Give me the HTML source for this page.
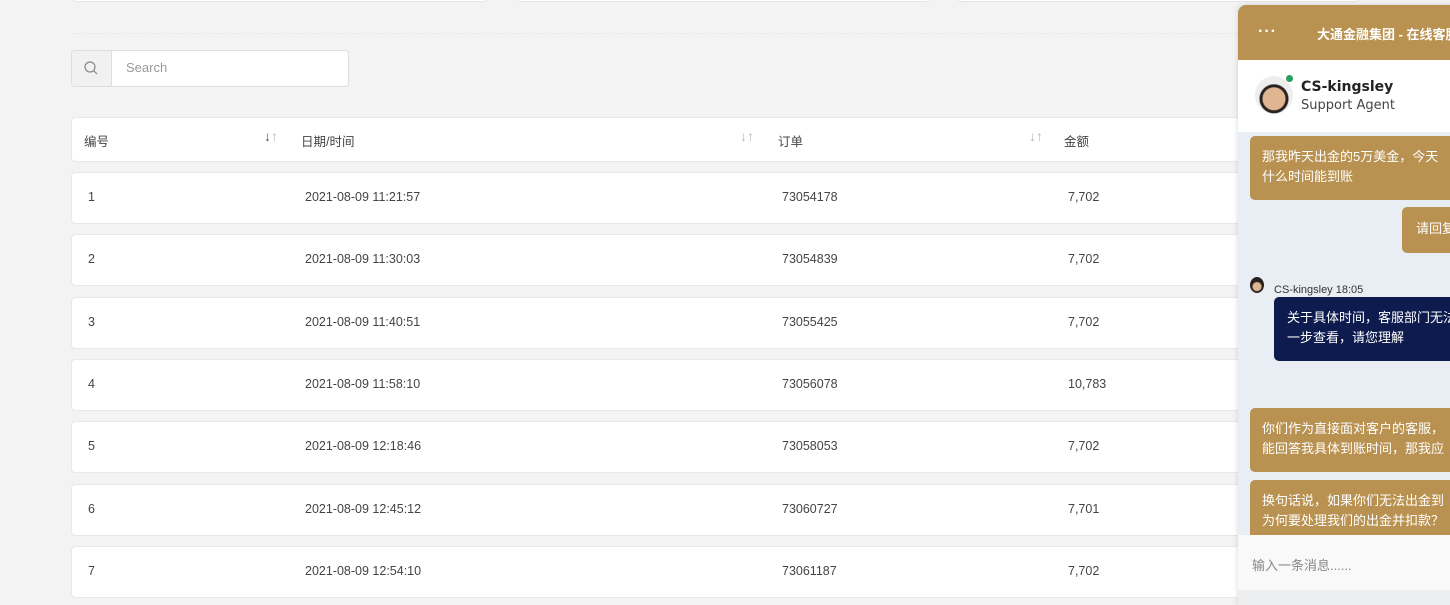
<!DOCTYPE html><html><head><meta charset="utf-8"><style>
body{margin:0;width:1450px;height:600px;overflow:hidden;background:#f3f3f3;font-family:"Liberation Sans","Noto Sans CJK SC",sans-serif;position:relative;color:#333}
.a{position:absolute}
.card{background:#fff;border-radius:4px;border:1px solid #e6e6e6}
.row{position:absolute;left:71px;width:1200px;height:50px;background:#fff;border:1px solid #e8e8e8;border-radius:4px;font-size:12.5px;color:#444}
.row span{position:absolute;top:17px}
.gold{background:#b99150;color:#fff}
.msg{position:absolute;font-size:13px;line-height:20px;border-radius:5px;padding:12px 14px;white-space:nowrap;overflow:hidden}
.ar{font-size:14px}
</style></head><body>
<div class="a card" style="left:72px;top:-10px;width:414px;height:10px"></div>
<div class="a card" style="left:516px;top:-10px;width:412px;height:10px"></div>
<div class="a card" style="left:957px;top:-10px;width:400px;height:10px"></div>
<div class="a" style="left:72px;top:33px;width:1166px;border-top:1px dashed #e8e8e8"></div>
<div class="a" style="left:71px;top:50px;width:276px;height:35px;background:#fff;border:1px solid #ddd;border-radius:4px">
<div class="a" style="left:0;top:0;width:39px;height:35px;background:#f1f1f1;border-right:1px solid #ddd;border-radius:4px 0 0 4px"><svg width="39" height="35"><circle cx="18" cy="16" r="5" fill="none" stroke="#888" stroke-width="1.2"/><line x1="21.5" y1="19.5" x2="25" y2="23" stroke="#888" stroke-width="1.2"/></svg></div>
<span class="a" style="left:54px;top:9px;font-size:13px;color:#999">Search</span></div>
<div class="row" style="top:117px;height:43px"><span style="left:12px;top:13px">编号</span><span class="ar" style="left:192px;top:10px;color:#555">↓<span style="color:#bbb;position:static">↑</span></span><span style="left:229px;top:13px">日期/时间</span><span class="ar" style="left:668px;top:10px;color:#bbb">↓↑</span><span style="left:706px;top:13px">订单</span><span class="ar" style="left:957px;top:10px;color:#bbb">↓↑</span><span style="left:992px;top:13px">金额</span></div>
<div class="row" style="top:172px"><span style="left:16px">1</span><span style="left:233px">2021-08-09 11:21:57</span><span style="left:710px">73054178</span><span style="left:996px">7,702</span></div>
<div class="row" style="top:234px"><span style="left:16px">2</span><span style="left:233px">2021-08-09 11:30:03</span><span style="left:710px">73054839</span><span style="left:996px">7,702</span></div>
<div class="row" style="top:297px"><span style="left:16px">3</span><span style="left:233px">2021-08-09 11:40:51</span><span style="left:710px">73055425</span><span style="left:996px">7,702</span></div>
<div class="row" style="top:359px"><span style="left:16px">4</span><span style="left:233px">2021-08-09 11:58:10</span><span style="left:710px">73056078</span><span style="left:996px">10,783</span></div>
<div class="row" style="top:421px"><span style="left:16px">5</span><span style="left:233px">2021-08-09 12:18:46</span><span style="left:710px">73058053</span><span style="left:996px">7,702</span></div>
<div class="row" style="top:484px"><span style="left:16px">6</span><span style="left:233px">2021-08-09 12:45:12</span><span style="left:710px">73060727</span><span style="left:996px">7,701</span></div>
<div class="row" style="top:546px"><span style="left:16px">7</span><span style="left:233px">2021-08-09 12:54:10</span><span style="left:710px">73061187</span><span style="left:996px">7,702</span></div>

<div class="a" style="left:1238px;top:5px;width:220px;height:600px;background:#e9edf4;border-radius:8px 0 0 0;overflow:hidden;box-shadow:0 0 6px rgba(0,0,0,.15)">
<div class="a gold" style="left:0;top:0;width:220px;height:55px"><span class="a" style="left:20px;top:22px;font-size:16px;font-weight:bold;letter-spacing:1px;line-height:10px">···</span><span class="a" style="left:79px;top:19px;font-size:13px;font-weight:bold;white-space:nowrap">大通金融集团 - 在线客服</span></div>
<div class="a" style="left:0;top:55px;width:220px;height:72px;background:#fff">
<div class="a" style="left:17px;top:16px;width:38px;height:38px;border-radius:50%;background:radial-gradient(circle at 50% 60%,#e0b592 0 11px,#2b2220 12px 14px,#eee 15px)"></div>
<div class="a" style="left:48px;top:15px;width:7px;height:7px;border-radius:50%;background:#2a9d5c"></div>
<span class="a" style="left:63px;top:19px;font-size:14px;font-weight:bold;color:#222;font-family:'DejaVu Sans',sans-serif">CS-kingsley</span>
<span class="a" style="left:63px;top:38px;font-size:13px;color:#444;font-family:'DejaVu Sans',sans-serif">Support Agent</span></div>
<div class="msg gold" style="left:12px;top:131px;width:200px;padding:11px 12px;height:42px">那我昨天出金的5万美金，今天<br>什么时间能到账</div>
<div class="msg gold" style="left:164px;top:202px;width:60px;height:22px">请回复</div>
<div class="a" style="left:12px;top:272px;width:14px;height:16px;border-radius:50%;background:radial-gradient(circle at 50% 60%,#e0b592 0 4px,#2b2220 5px)"></div>
<span class="a" style="left:36px;top:279px;font-size:11px;color:#333">CS-kingsley 18:05</span>
<div class="msg" style="left:36px;top:292px;width:200px;height:42px;padding:11px 13px;background:#0d1b4f;color:#fff">关于具体时间，客服部门无法<br>一步查看，请您理解</div>
<div class="msg gold" style="left:12px;top:403px;width:200px;height:42px;padding:11px 12px">你们作为直接面对客户的客服，<br>能回答我具体到账时间，那我应</div>
<div class="msg gold" style="left:12px;top:475px;width:200px;height:50px;padding:11px 12px">换句话说，如果你们无法出金到<br>为何要处理我们的出金并扣款？</div>
<div class="a" style="left:0;top:530px;width:220px;height:55px;background:#f9f9fa"><span class="a" style="left:14px;top:20px;font-size:13px;color:#888">输入一条消息......</span></div>
<div class="a" style="left:0;top:585px;width:220px;height:15px;background:#eceef0"></div>
</div>
</body></html>
